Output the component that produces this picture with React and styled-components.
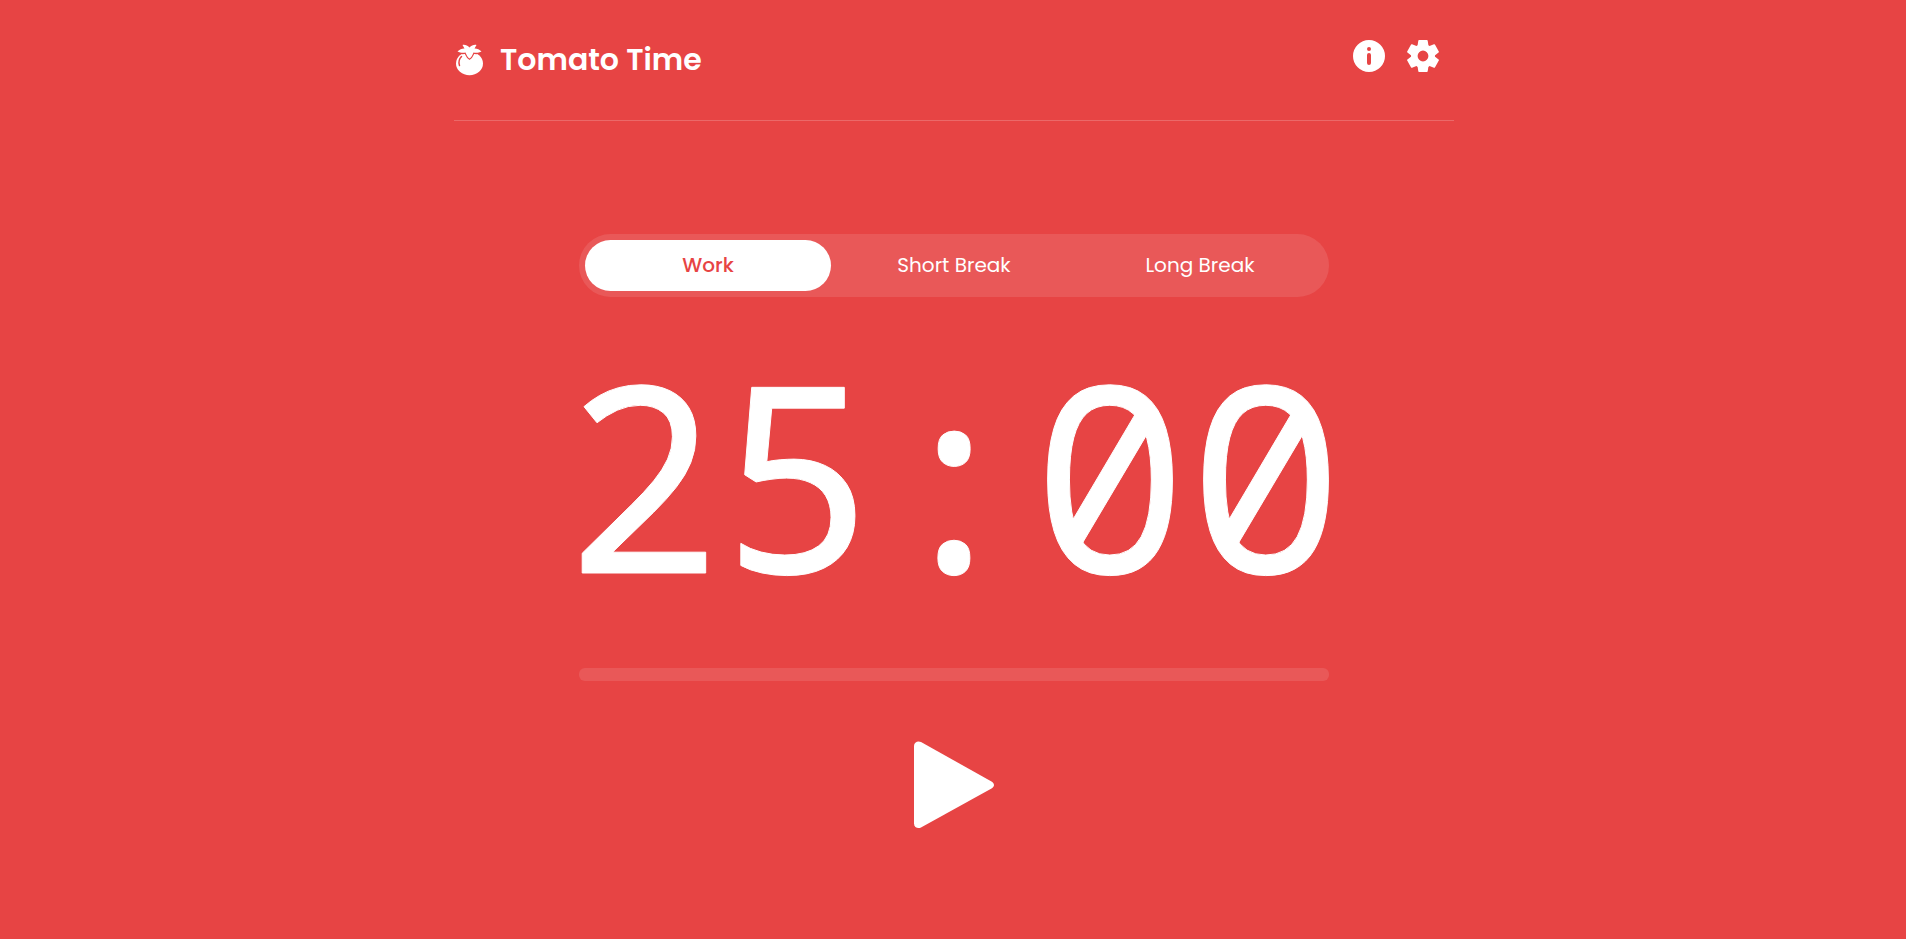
import React, { useState } from "react";
import styled, { createGlobalStyle } from "styled-components";

const GlobalStyle = createGlobalStyle`
  * { box-sizing: border-box; }
  body {
    margin: 0;
    background: #e74444;
    color: #fff;
    font-family: Poppins, Inter, sans-serif;
  }
  button {
    padding: 0;
    border: 0;
    background: none;
    color: inherit;
    font: inherit;
    cursor: pointer;
  }
`;

const Page = styled.div`
  display: flex;
  flex-direction: column;
  align-items: center;
  min-height: 100vh;
  padding: 0 14px 0 16px;
`;

const Header = styled.header`
  display: flex;
  justify-content: space-between;
  width: 100%;
  max-width: 1000px;
  height: 121px;
  padding: 40px 15px 0 0;
  border-bottom: 1px solid rgba(255, 255, 255, 0.2);
`;

const Brand = styled.div`
  display: flex;
  align-items: center;
  gap: 14px;
  height: 40px;

  svg { width: 32px; height: 32px; }
`;

const Title = styled.h1`
  margin: 0;
  font-size: 30px;
  line-height: 40px;
  font-weight: 600;
`;

const Actions = styled.nav`
  display: flex;
  gap: 22px;
`;

const IconButton = styled.button`
  width: 32px;
  height: 32px;

  svg { display: block; width: 100%; height: 100%; }
`;

const Main = styled.main`
  display: flex;
  flex-direction: column;
  align-items: center;
  width: 100%;
  max-width: 750px;
  padding-top: 113px;
`;

const Modes = styled.div`
  display: grid;
  grid-template-columns: repeat(3, 1fr);
  width: 100%;
  padding: 6px;
  border-radius: 32px;
  background: rgba(255, 255, 255, 0.11);
`;

const Mode = styled.button`
  && {
    height: 51px;
    padding-bottom: 2px;
    border-radius: 26px;
    font-size: 20px;
    font-weight: ${(p) => (p.$active ? 500 : 400)};
    color: ${(p) => (p.$active ? "#e74444" : "#fff")};
    background: ${(p) => (p.$active ? "#fff" : "none")};
  }
`;

const Clock = styled.div`
  padding-bottom: 20px;
  font-family: "Noto Sans Mono", "Noto Sans", monospace;
  font-size: 260px;
  font-weight: 400;
  line-height: 351px;
  white-space: nowrap;
  -webkit-text-stroke: 1px #fff;
`;

const Progress = styled.div`
  width: 100%;
  height: 13px;
  border-radius: 6px;
  background: rgba(255, 255, 255, 0.11);
`;

const PlayButton = styled.button`
  margin-top: 60px;

  svg { display: block; width: 80px; height: 88px; }
`;

const TomatoIcon = () => (
  <svg viewBox="0 0 32 32" fill="currentColor" aria-hidden="true">
    <ellipse cx="15.5" cy="19.5" rx="13.5" ry="11.8" />
    <path
      d="M3.5 7.5C5.5 5.5 8 4.5 10.5 4.6L8.5 1C11 .5 13.5 1.5 15.5 3.5C17.5 1.5 20 .5 22.5 1L20.5 4.6C23 4.5 25.5 5.5 27.5 7.5C25 8.8 22 9.2 19.5 8.5C18.5 10.5 17.5 13.5 15.5 14.5C13.5 13.5 12.5 10.5 11.5 8.5C9 9.2 6 8.8 3.5 7.5z"
      stroke="#e74444"
      strokeWidth="2.5"
      paintOrder="stroke"
    />
    <path d="M7.5 12.5C5 15 4.5 18.5 5.5 21.5" fill="none" stroke="#e74444" strokeWidth="1.5" strokeLinecap="round" />
  </svg>
);

const InfoIcon = () => (
  <svg viewBox="0 0 32 32" fill="currentColor" aria-hidden="true">
    <path
      fillRule="evenodd"
      d="M16 0a16 16 0 1 1 0 32a16 16 0 0 1 0-32zM16 7a2 2 0 1 0 0 4a2 2 0 0 0 0-4zM16 13a2 2 0 0 0-2 2v8a2 2 0 0 0 4 0v-8a2 2 0 0 0-2-2z"
    />
  </svg>
);

const GearIcon = () => (
  <svg viewBox="0 0 32 32" fill="currentColor" aria-hidden="true">
    <circle cx="16" cy="16" r="8.7" fill="none" stroke="currentColor" strokeWidth="6.6" />
    {[0, 60, 120, 180, 240, 300].map((angle) => (
      <path
        key={angle}
        transform={`rotate(${angle} 16 16)`}
        d="M12.1 0h7.8a.8.8 0 0 1 .8.7L21.5 6H10.5L11.3.7a.8.8 0 0 1 .8-.7z"
      />
    ))}
  </svg>
);

const PlayIcon = () => (
  <svg viewBox="0 0 80 88" fill="currentColor" aria-hidden="true">
    <path d="M0 5C0 1 4 -.5 7 1L77.5 40.5C80.8 42.5 80.8 45.5 77.5 47.5L7 86.5C4 88 0 86.5 0 82.5z" />
  </svg>
);

const modes = [
  { name: "Work", time: "25:00" },
  { name: "Short Break", time: "05:00" },
  { name: "Long Break", time: "15:00" },
];

export default function App() {
  const [current, setCurrent] = useState(0);
  return (
    <>
      <GlobalStyle />
      <Page>
        <Header>
          <Brand>
            <TomatoIcon />
            <Title>Tomato Time</Title>
          </Brand>
          <Actions>
            <IconButton aria-label="About"><InfoIcon /></IconButton>
            <IconButton aria-label="Settings"><GearIcon /></IconButton>
          </Actions>
        </Header>
        <Main>
          <Modes>
            {modes.map((mode, i) => (
              <Mode key={mode.name} $active={i === current} onClick={() => setCurrent(i)}>
                {mode.name}
              </Mode>
            ))}
          </Modes>
          <Clock role="timer">{modes[current].time}</Clock>
          <Progress role="progressbar" aria-label="Elapsed time" aria-valuenow={0} />
          <PlayButton aria-label="Start"><PlayIcon /></PlayButton>
        </Main>
      </Page>
    </>
  );
}
